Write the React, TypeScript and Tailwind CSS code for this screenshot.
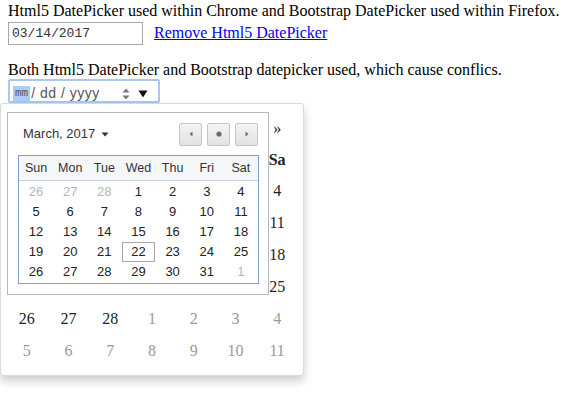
import React from "react";

const chromeWeeks: [number, boolean][][] = [
  [[26, true], [27, true], [28, true], [1, false], [2, false], [3, false], [4, false]],
  [[5, false], [6, false], [7, false], [8, false], [9, false], [10, false], [11, false]],
  [[12, false], [13, false], [14, false], [15, false], [16, false], [17, false], [18, false]],
  [[19, false], [20, false], [21, false], [22, false], [23, false], [24, false], [25, false]],
  [[26, false], [27, false], [28, false], [29, false], [30, false], [31, false], [1, true]],
];

const bsWeeks: [number, boolean][][] = [
  [[26, false], [27, false], [28, false], [1, false], [2, false], [3, false], [4, false]],
  [[5, false], [6, false], [7, false], [8, false], [9, false], [10, false], [11, false]],
  [[12, false], [13, false], [14, false], [15, false], [16, false], [17, false], [18, false]],
  [[19, false], [20, false], [21, false], [22, false], [23, false], [24, false], [25, false]],
  [[26, false], [27, false], [28, false], [1, true], [2, true], [3, true], [4, true]],
  [[5, true], [6, true], [7, true], [8, true], [9, true], [10, true], [11, true]],
];

function NavButton({ kind }: { kind: "prev" | "today" | "next" }) {
  return (
    <div className="w-[23px] h-[23px] rounded-[2px] border border-[#c6c6c6] bg-gradient-to-b from-[#f4f4f4] to-[#e2e2e2] flex items-center justify-center">
      <svg width="8" height="8" viewBox="0 0 8 8">
        {kind === "prev" && <path d="M5.5 1.5 L2.5 4 L5.5 6.5 Z" fill="#6b6b6b" />}
        {kind === "next" && <path d="M2.5 1.5 L5.5 4 L2.5 6.5 Z" fill="#6b6b6b" />}
        {kind === "today" && <circle cx="4" cy="4" r="2.6" fill="#6b6b6b" />}
      </svg>
    </div>
  );
}

function ChromePicker() {
  return (
    <div className="absolute left-[7px] top-[112px] w-[262px] h-[183px] bg-white border border-[#b9b9b9] font-['Liberation_Sans',Arial,sans-serif] text-[13px] text-[#222]">
      <div className="flex items-center justify-between pl-[15px] pr-[10px] pt-[9px] h-[33px]">
        <div className="flex items-center gap-[6px] text-[#333]">
          <span>March, 2017</span>
          <svg width="8" height="5" viewBox="0 0 8 5">
            <path d="M0.5 0.5 H7.5 L4 4.5 Z" fill="#333" />
          </svg>
        </div>
        <div className="flex gap-[5px]">
          <NavButton kind="prev" />
          <NavButton kind="today" />
          <NavButton kind="next" />
        </div>
      </div>
      <div className="mt-[9px] ml-[10px] w-[241px] border border-[#7b9fd4]">
        <div className="grid grid-cols-7 h-[25px] items-center bg-[#f5f6f8] border-b border-[#c9d3e2] text-[12.5px] text-[#333]">
          {["Sun", "Mon", "Tue", "Wed", "Thu", "Fri", "Sat"].map((d) => (
            <div key={d} className="text-center">
              {d}
            </div>
          ))}
        </div>
        <div className="pt-[1px] pb-[1px]">
          {chromeWeeks.map((w, i) => (
            <div key={i} className="grid grid-cols-7 h-[20px] items-center">
              {w.map(([n, other], j) => (
                <div key={j} className="flex justify-center">
                  <div
                    className={
                      "w-[33px] h-[20px] flex items-center justify-center " +
                      (other ? "text-[#b5b5b5] " : "text-[#222] ") +
                      (i === 3 && j === 3 ? "border border-[#a8a8a8]" : "")
                    }
                  >
                    {n}
                  </div>
                </div>
              ))}
            </div>
          ))}
        </div>
      </div>
    </div>
  );
}

function BootstrapPicker() {
  return (
    <div className="absolute left-0 top-[103px] w-[304px] h-[273px] bg-white border border-black/15 rounded-[4px] shadow-[0_5px_10px_rgba(0,0,0,0.2)] px-[5px] pt-[10px] font-['Liberation_Serif','Times_New_Roman',serif] text-[16px] text-[#222]">
      <div className="grid grid-cols-7 h-[30px] items-center text-center">
        <div>«</div>
        <div className="col-span-5">March 2017</div>
        <div>»</div>
      </div>
      <div className="grid grid-cols-7 h-[31px] items-center text-center font-bold">
        {["Su", "Mo", "Tu", "We", "Th", "Fr", "Sa"].map((d) => (
          <div key={d}>{d}</div>
        ))}
      </div>
      {bsWeeks.map((w, i) => (
        <div key={i} className="grid grid-cols-7 h-[32px] items-center text-center">
          {w.map(([n, other], j) => (
            <div key={j} className={other ? "text-[#999]" : "text-[#222]"}>
              {n}
            </div>
          ))}
        </div>
      ))}
    </div>
  );
}

export default function App() {
  return (
    <div className="relative w-[562px] h-[398px] bg-white overflow-hidden pl-[8px] pt-[2px] font-['Liberation_Serif','Times_New_Roman',serif] text-[16px] text-black">
      <div className="leading-[18px]">
        Html5 DatePicker used within Chrome and Bootstrap DatePicker used within Firefox.
      </div>
      <div className="mt-[2px] flex items-center gap-[11px] h-[23px]">
        <div className="w-[135px] h-[23px] border border-[#a9a9a9] flex items-center pl-[3px] font-['Liberation_Mono','Courier_New',monospace] text-[13px] text-[#333]">
          03/14/2017
        </div>
        <a href="#" className="text-[#0000ee] underline leading-[18px] -mt-[2px]">
          Remove Html5 DatePicker
        </a>
      </div>
      <div className="mt-[16px] leading-[18px]">
        Both Html5 DatePicker and Bootstrap datepicker used, which cause conflics.
      </div>
      <div className="w-[152px] h-[24px] border-2 border-[#a9c7ef] rounded-[2px] flex items-center pt-[5px] pl-[3px] pr-[10px] font-['Liberation_Sans',Arial,sans-serif] text-[14px] text-[#555]">
        <span className="bg-[#accdf5] text-[#555] font-['Liberation_Mono','Courier_New',monospace] text-[11px] leading-[15px] px-[2px]">mm</span>
        <span className="ml-[1px] tracking-[0.5px]">/ dd / yyyy</span>
        <span className="ml-auto flex flex-col gap-[2px]">
          <svg width="8" height="5" viewBox="0 0 8 5">
            <path d="M4 0.5 L7.5 4.5 H0.5 Z" fill="#777" />
          </svg>
          <svg width="8" height="5" viewBox="0 0 8 5">
            <path d="M0.5 0.5 H7.5 L4 4.5 Z" fill="#777" />
          </svg>
        </span>
        <svg className="ml-[8px]" width="10" height="8" viewBox="0 0 10 8">
          <path d="M0.5 0.5 H9.5 L5 7.5 Z" fill="#111" />
        </svg>
      </div>
      <BootstrapPicker />
      <ChromePicker />
    </div>
  );
}
